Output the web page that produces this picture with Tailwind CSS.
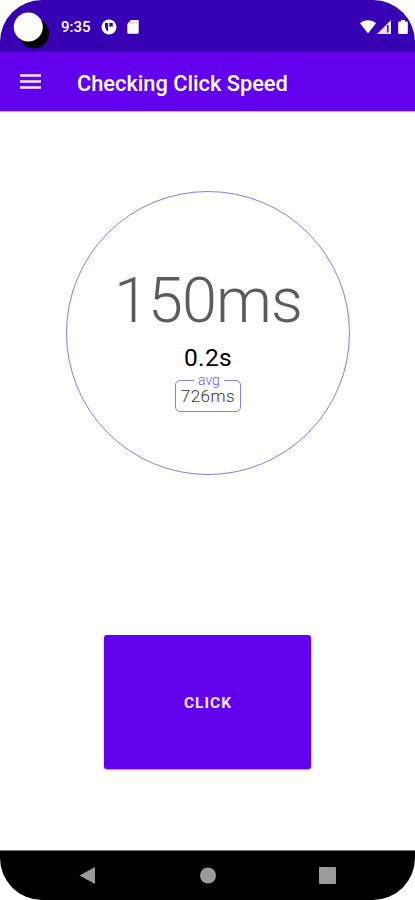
<!DOCTYPE html>
<html lang="en">
<head>
  <meta charset="UTF-8" />
  <meta name="viewport" content="width=device-width, initial-scale=1" />
  <title>Checking Click Speed</title>
  <script src="https://cdn.jsdelivr.net/npm/@tailwindcss/browser@4"></script>
</head>
<body class="bg-white font-['Roboto',sans-serif]">
  <div class="w-[415px] h-[900px] flex flex-col overflow-hidden rounded-[42px] bg-white">

    <!-- status bar -->
    <div class="h-[52px] shrink-0 bg-[#3700b3] flex items-start text-white">
      <svg class="w-[52px] h-[52px]" viewBox="0 0 52 52">
        <circle cx="34" cy="33.5" r="15" fill="#000" />
        <circle cx="28.3" cy="27" r="14.5" fill="#fff" />
      </svg>
      <span class="ml-[9px] mt-[17px] w-[30px] text-[15px] leading-5 font-medium whitespace-nowrap">9:35</span>
      <svg class="ml-[10px] mt-[19px] w-4 h-4" viewBox="0 0 16 16">
        <circle cx="8" cy="8" r="7.5" fill="#fff" />
        <path d="M4 4h3v8.5C4.800 11.500 3.500 7.500 4 4zM8.300 4h3.500v3.400H8.300z" fill="#3700b3" />
      </svg>
      <svg class="ml-[10px] mt-5 w-3 h-[14px]" viewBox="0 0 12 14">
        <path d="M4 0h6.500A1.200 1.200 0 0 1 11.700 1.200v11.400a1.200 1.200 0 0 1-1.200 1.200h-9A1.200 1.200 0 0 1 .3 12.600V4z" fill="#fff" />
        <path d="M4.600 1.600v2.200M6.900 1.600v2.200M9.200 1.600v2.200" stroke="#3700b3" stroke-opacity=".35" stroke-width="1" />
      </svg>
      <div class="ml-auto mr-[7px] mt-5 flex items-start">
        <svg class="w-4 h-[14px]" viewBox="0 0 16 14">
          <path d="M8 13.600 0 3.200C2 1.300 4.900.3 8 .3s6 1 8 2.900z" fill="#fff" />
        </svg>
        <svg class="ml-[1px] w-[14px] h-[14px]" viewBox="0 0 14 14">
          <path d="M14 0v14H0z" fill="#fff" fill-opacity=".88" />
          <path d="M10.800 5v7.500" stroke="#3700b3" stroke-width="1.400" />
        </svg>
        <svg class="ml-[7px] w-[10px] h-[14px]" viewBox="0 0 10 14">
          <path d="M3 0h4v1.400h1.800a1 1 0 0 1 1 1V13a1 1 0 0 1-1 1H1.200a1 1 0 0 1-1-1V2.400a1 1 0 0 1 1-1H3z" fill="#fff" />
        </svg>
      </div>
    </div>

    <!-- app bar -->
    <header class="h-[59px] shrink-0 bg-[#6200ee] flex items-center text-white shadow-[0_1px_1px_rgba(98,0,238,0.35)]">
      <button class="ml-5" aria-label="Menu">
        <svg class="w-[21px] h-[15px] block" viewBox="0 0 21 15">
          <path d="M0 1.500h21M0 7.500h21M0 13.500h21" stroke="#fff" stroke-width="2.400" stroke-opacity=".92" />
        </svg>
      </button>
      <h1 class="ml-9 mt-1 text-[21.8px] leading-7 font-medium whitespace-nowrap">Checking Click Speed</h1>
    </header>

    <main class="flex-1 flex flex-col items-center">
      <div class="mt-20 ml-[1px] w-[284px] h-[284px] shrink-0 rounded-full border border-[#8a78ee] flex flex-col items-center">
        <div class="mt-[71px] text-[63px] leading-[76px] font-light tracking-[-0.9px] text-[#5c5c5c] whitespace-nowrap">150ms</div>
        <div class="mt-[4px] text-[24.5px] leading-[30px] tracking-[0.4px] text-black">0.2s</div>
        <fieldset class="relative mt-[7px] w-[66px] h-[32px] rounded-[5px] border-[1.5px] border-[#8f7df0] flex justify-center">
          <span class="absolute -top-[7px] left-[18px] px-1 bg-white text-[14px] leading-[13px] font-light text-[#6f52ee]">avg</span>
          <span class="relative mt-[7px] text-[17px] leading-[17px] h-[17px] font-light tracking-[0.5px] text-[#333]">726ms</span>
        </fieldset>
      </div>

      <button class="mt-40 w-[207px] h-[134px] shrink-0 rounded-[3px] bg-[#6200ee] text-white/90 text-[15.5px] font-bold tracking-[1px] pt-[3px] pl-[1px] shadow-[0_1px_2px_rgba(0,0,0,0.4)]">CLICK</button>
    </main>

    <!-- navigation bar -->
    <nav class="h-[50px] shrink-0 bg-black border-t border-[#777]">
      <svg class="w-[415px] h-[49px] block" viewBox="0 0 415 49" fill="#9b9b9b">
        <path d="M79.500 24.500 95 16v17z" />
        <circle cx="208" cy="24.500" r="8" />
        <rect x="319" y="16" width="17" height="17" rx="1" />
      </svg>
    </nav>
  </div>
</body>
</html>
